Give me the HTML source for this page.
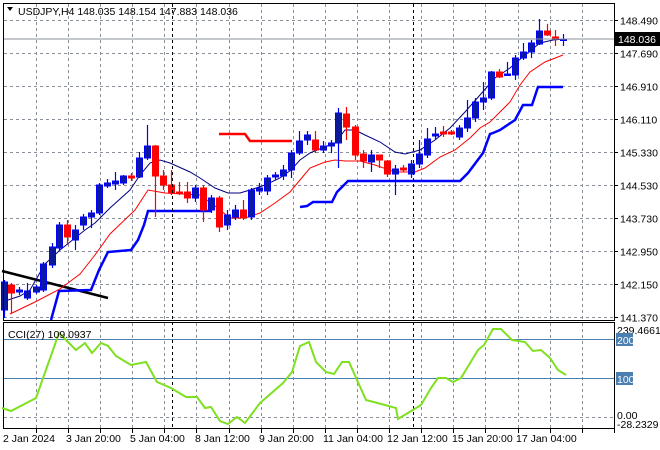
<!DOCTYPE html>
<html><head><meta charset="utf-8"><style>
html,body{margin:0;padding:0;background:#fff;width:660px;height:450px;overflow:hidden}
svg text{font-family:"Liberation Sans","DejaVu Sans",sans-serif;font-size:10.5px;fill:#000}
</style></head><body>
<svg id="s" width="660" height="450" xmlns="http://www.w3.org/2000/svg">
<rect width="660" height="450" fill="#fff"/>
<g id="grid"></g>
<g id="plot"></g>
<line x1="4" y1="39" x2="614" y2="39" stroke="#8a8f99" stroke-width="1"/>
<line x1="172.5" y1="4" x2="172.5" y2="429" stroke="#000" stroke-dasharray="3,3"/>
<line x1="413.5" y1="4" x2="413.5" y2="429" stroke="#000" stroke-dasharray="3,3"/>
<rect x="3.5" y="3.5" width="611" height="317" fill="none" stroke="#000"/>
<rect x="3.5" y="322.5" width="611" height="106" fill="none" stroke="#000"/>
<line x1="4" y1="339.5" x2="614" y2="339.5" stroke="#4a7fb0"/>
<line x1="4" y1="378.5" x2="614" y2="378.5" stroke="#4a7fb0"/>
<polyline fill="none" stroke="#7fe020" stroke-width="2" points="2,408 11,411 36,398 59,333 76,350 85,343 92,353 101,343 108,346 116,356 131,365 146,362 157,382 171,388 186,397 197,397 205,408 211,407 220,421 228,424 237,417 245,423 260,403 283,383 292,372 300,346 309,342 316,362 326,372 334,374 342,362 349,362 366,400 385,405 396,408 398,419 421,405 431,388 438,378 446,378 453,382 461,378 478,350 484,345 493,329 501,329 512,340 525,342 533,351 541,350 550,358 558,370 566,375"/>
<path d="M7 7 L13 7 L10 11 Z" fill="#000"/>
<text x="18" y="15">USDJPY,H4  148.035 148.154 147.883 148.036</text>
<text x="8" y="338">CCI(27) 109.0937</text>
<g id="axis"></g>
<rect x="614" y="32" width="46" height="14" fill="#000"/>
<text x="618" y="43" style="fill:#fff">148.036</text>
<text x="617" y="334">239.4661</text>
<rect x="616" y="333" width="17" height="13" fill="#4a7fb0"/>
<text x="617" y="344" style="fill:#fff">200</text>
<rect x="616" y="372" width="17" height="13" fill="#4a7fb0"/>
<text x="617" y="383" style="fill:#fff">100</text>
<text x="617" y="419">0.00</text>
<text x="617" y="428">-28.2329</text>
<text x="3" y="442">2 Jan 2024</text>
<text x="66" y="442">3 Jan 20:00</text>
<text x="130" y="442">5 Jan 04:00</text>
<text x="195" y="442">8 Jan 12:00</text>
<text x="259" y="442">9 Jan 20:00</text>
<text x="323" y="442">11 Jan 04:00</text>
<text x="387" y="442">12 Jan 12:00</text>
<text x="452" y="442">15 Jan 20:00</text>
<text x="516" y="442">17 Jan 04:00</text>
</svg>
<script>
var NS="http://www.w3.org/2000/svg";
function el(p,t,a){var e=document.createElementNS(NS,t);for(var k in a)e.setAttribute(k,a[k]);p.appendChild(e);return e;}
var g=document.getElementById('grid'),p=document.getElementById('plot'),ax=document.getElementById('axis');
var gc="#8a9099";
for(var x=36;x<614;x+=32.1){var xx=Math.round(x)+.5;
 el(g,'line',{x1:xx,y1:4,x2:xx,y2:320,stroke:gc,'stroke-dasharray':'3,3'});
 el(g,'line',{x1:xx,y1:323,x2:xx,y2:428,stroke:gc,'stroke-dasharray':'3,3'});
 el(g,'line',{x1:xx,y1:429,x2:xx,y2:433,stroke:'#000'});}
var labs=["148.490","147.690","146.910","146.110","145.330","144.530","143.730","142.950","142.150","141.370"];
for(var i=0;i<10;i++){var y=20+i*33+.5;
 el(g,'line',{x1:4,y1:y,x2:614,y2:y,stroke:gc,'stroke-dasharray':'3,3'});
 el(ax,'line',{x1:614,y1:y,x2:618,y2:y,stroke:'#000'});
 var t=el(ax,'text',{x:620,y:y+4});t.textContent=labs[i];}
el(g,'line',{x1:4,y1:417.5,x2:614,y2:417.5,stroke:gc,'stroke-dasharray':'3,3'});
el(p,'polyline',{fill:'none',stroke:'#000',"stroke-width":2.5,points:"2,271 108,298"});
el(p,'polyline',{fill:'none',stroke:'#0000ff',"stroke-width":2.5,points:"51,320 59,291 91,290 99,270 108,252 131,250 138,240 144,225 148,211 211,211"});
el(p,'polyline',{fill:'none',stroke:'#0000ff',"stroke-width":2.5,points:"300,207 307,206 313,202 332,202 337,192 348,181 460,181 468,173 483,153 490,134 493,133 500,130 515,120 523,105 532,105 538,87 563,87"});
el(p,'polyline',{fill:'none',stroke:'#ff0000',"stroke-width":2.5,points:"219,134 245,134 250,141 292,141"});
el(p,'polyline',{fill:'none',stroke:'#ff0000',"stroke-width":1,points:"10,314 35,302 60,289 80,274 95,255 110,234 135,210 148,190 165,193 200,195 215,206 230,218 245,218 260,213 275,203 290,192 300,180 310,168 325,162 335,160 345,161 360,161 375,165 395,172 415,172 425,168 440,157 455,150 470,138 480,128 490,122 500,112 510,102 520,85 530,72 545,62 563,55"});
el(p,'polyline',{fill:'none',stroke:'#000080',"stroke-width":1,points:"8,300 20,296 30,290 45,264 60,250 75,238 85,230 95,223 110,208 130,190 140,175 150,163 160,160 170,163 190,172 200,178 215,188 228,193 240,193 250,190 265,185 280,178 291,170 300,160 310,153 322,148 335,143 345,130 355,130 365,135 380,142 395,152 405,154 420,150 435,140 450,128 465,112 480,95 495,78 510,68 525,55 540,43 553,40 565,39"});
var d=[[4,310,282,280,318],[11,285,293,283,313],[19,292,290,287,295],[27,298,291,283,300],[36,292,287,285,294],[43,290,264,262,292],[52,265,247,243,268],[59,248,225,222,250],[67,225,237,220,245],[75,240,230,225,250],[83,225,217,214,230],[91,217,213,210,228],[99,213,185,183,215],[107,186,183,179,188],[115,184,181,172,190],[123,183,176,175,185],[131,176,178,173,181],[139,177,158,152,178],[147,158,146,125,160],[155,146,176,145,217],[163,176,185,170,190],[171,185,193,170,195],[179,192,193,182,195],[187,192,198,182,203],[195,198,188,185,202],[203,188,210,185,222],[211,210,198,195,213],[219,198,227,196,232],[227,225,215,210,230],[235,217,210,205,220],[243,210,217,200,220],[251,217,190,188,220],[259,191,188,183,195],[267,191,178,175,195],[275,177,175,172,180],[283,176,170,165,180],[291,170,153,150,178],[299,153,141,131,155],[307,140,135,131,145],[315,140,150,131,153],[323,150,146,141,153],[331,146,143,140,153],[338,143,113,108,168],[346,114,127,107,140],[355,127,155,125,160],[363,154,161,150,168],[371,162,155,150,172],[379,155,160,155,168],[387,161,174,160,177],[395,174,169,165,195],[403,168,170,165,172],[411,174,164,160,178],[419,164,154,140,168],[427,155,139,128,158],[435,136,134,127,140],[443,132,134,126,137],[451,132,134,130,135],[459,137,128,125,140],[467,128,118,100,132],[475,118,102,98,122],[483,102,98,82,110],[491,98,72,71,100],[499,72,77,69,78],[507,74,74,62,75],[515,75,58,55,80],[523,58,52,43,60],[531,52,43,40,58],[539,44,31,19,45],[547,31,35,24,36],[555,37,39,30,46],[563,39,39,34,46]];
d.forEach(function(c){var x=c[0],o=c[1],cl=c[2],up=cl<=o;var col=up?'#0000ff':'#ff0000';
 el(p,'line',{x1:x+.5,y1:c[3],x2:x+.5,y2:c[4],stroke:col,'stroke-width':1.2});
 var top=Math.min(o,cl),h=Math.max(Math.abs(o-cl),1.5);
 el(p,'rect',{x:x-2.5,y:top,width:6,height:h,fill:up?'#0c1a9a':'#ff0000',stroke:col,'stroke-width':1});});
</script>
</body></html>
